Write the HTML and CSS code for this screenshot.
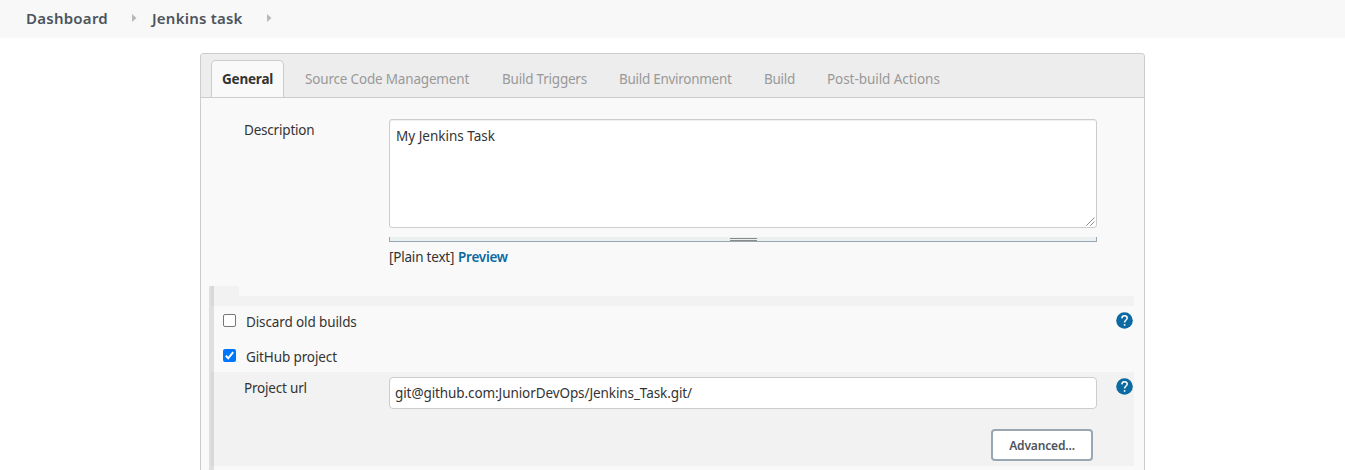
FILE: index.html
```html
<!DOCTYPE html>
<html lang="en">
<head>
<meta charset="utf-8">
<title>Jenkins task Config</title>
<link rel="stylesheet" href="styles.css">
</head>
<body>
<nav class="crumbs">
  <a class="crumb crumb-dashboard">Dashboard</a>
  <svg class="arrow" width="5" height="8" viewBox="0 0 5 8"><path d="M0 0L4.5 4L0 8Z" fill="#b8b8b8"/></svg>
  <a class="crumb crumb-task">Jenkins task</a>
  <svg class="arrow" width="5" height="8" viewBox="0 0 5 8"><path d="M0 0L4.5 4L0 8Z" fill="#b8b8b8"/></svg>
</nav>
<main class="panel">
  <div class="tabs">
    <div class="tab active">General</div>
    <div class="tab tab-scm">Source Code Management</div>
    <div class="tab tab-triggers">Build Triggers</div>
    <div class="tab tab-env">Build Environment</div>
    <div class="tab tab-build">Build</div>
    <div class="tab tab-post">Post-build Actions</div>
  </div>
  <section class="description">
    <label class="label label-description">Description</label>
    <div class="editor">
      <div class="textarea"><span>My Jenkins Task</span>
        <svg class="grip" width="9" height="9" viewBox="0 0 9 9"><path d="M0.5 8.5L8.5 0.5M4.5 8.5L8.5 4.5" stroke="#555" stroke-width="1" fill="none" stroke-dasharray="1.15 .26"/></svg>
      </div>
      <div class="handle"><i class="handle-lines"></i></div>
      <div class="hint"><span class="plain">[Plain text]</span><a class="preview">Preview</a></div>
    </div>
  </section>
  <section class="options">
    <div class="spacer-top"></div>
    <div class="spacer-bottom"></div>
    <div class="option">
      <span class="check"></span><span class="option-text text-discard">Discard old builds</span>
      <svg class="help" width="17" height="17" viewBox="0 0 17 17"><circle cx="8.5" cy="8.5" r="8.3" fill="#0b6aa2"/><path d="M5.8 6.4C5.9 4.6 7 3.7 8.5 3.7C10.1 3.7 11.2 4.7 11.2 6.1C11.2 8 8.6 8.2 8.6 10.6" fill="none" stroke="#fff" stroke-width="1.5"/><path d="M7.8 12.1h1.6v1.6H7.8z" fill="#fff"/></svg>
    </div>
    <div class="option option-github">
      <span class="check checked"><svg width="13" height="13" viewBox="0 0 13 13"><path d="M2.8 6.8L5.2 9.3L10.2 3.2" fill="none" stroke="#fff" stroke-width="2"/></svg></span><span class="option-text text-github">GitHub project</span>
    </div>
    <div class="project">
      <div class="project-row">
        <label class="label label-url">Project url</label>
        <div class="input"><span>git@github.com:JuniorDevOps/Jenkins_Task.git/</span></div>
        <svg class="help help-url" width="17" height="17" viewBox="0 0 17 17"><circle cx="8.5" cy="8.5" r="8.3" fill="#0b6aa2"/><path d="M5.8 6.4C5.9 4.6 7 3.7 8.5 3.7C10.1 3.7 11.2 4.7 11.2 6.1C11.2 8 8.6 8.2 8.6 10.6" fill="none" stroke="#fff" stroke-width="1.5"/><path d="M7.8 12.1h1.6v1.6H7.8z" fill="#fff"/></svg>
      </div>
      <button class="advanced">Advanced...</button>
    </div>
  </section>
</main>
</body>
</html>
```
FILE: styles.css
```css
* { box-sizing: border-box; }
body {
  margin: 0;
  background: #fff;
  color: #333;
  font: 13.5px/20px "Noto Sans", "Open Sans", sans-serif;
  white-space: nowrap;
}
.crumbs {
  display: flex;
  align-items: center;
  height: 38px;
  padding: 0 0 2px 26px;
  background: #f8f8f8;
  color: #4d545d;
  font-size: 15px;
  font-weight: 600;
}
.crumb-dashboard { width: 106px; letter-spacing: .25px; }
.crumb-task { width: 115px; margin-left: 15px; letter-spacing: .22px; }
.arrow { flex: none; }
.panel {
  width: 945px;
  height: 417px;
  margin: 15px 0 0 200px;
  border: 1px solid #ccc;
  border-bottom: 0;
  border-radius: 4px 4px 0 0;
  background: #f9f9f9;
}
.tabs {
  display: flex;
  height: 44px;
  padding: 6px 0 0 10px;
  border-bottom: 1px solid #ccc;
  border-radius: 3px 3px 0 0;
  background: #ededed;
  color: #999;
}
.tab { flex: none; padding-top: 9px; }
.active {
  width: 73px;
  height: 37px;
  padding: 8px 0 0 10px;
  border: 1px solid #ccc;
  border-bottom: 0;
  border-radius: 5px 5px 0 0;
  background: #f9f9f9;
  color: #333;
  font-weight: 700;
  letter-spacing: -.2px;
}
.tab-scm { width: 197px; margin-left: 21px; letter-spacing: -.18px; }
.tab-triggers { width: 117px; letter-spacing: -.22px; }
.tab-env { width: 145px; letter-spacing: -.28px; }
.tab-build { width: 63px; letter-spacing: -.3px; }
.tab-post { letter-spacing: -.06px; }
.description { display: flex; height: 188px; padding: 21px 0 0 43px; }
.label { flex: none; width: 145px; letter-spacing: -.2px; }
.label-description { padding-top: 1px; }
.editor { width: 708px; }
.textarea {
  position: relative;
  height: 109px;
  padding: 6px;
  border: 1px solid #ccc;
  border-radius: 3px;
  background: #fff;
  box-shadow: inset 0 1px 1px #0001;
}
.grip { position: absolute; right: 1px; bottom: 1px; }
.handle {
  display: flex;
  justify-content: center;
  height: 5px;
  margin-top: 9px;
  border: 1px solid #98a7b1;
  border-top: 0;
  background: #eaeff0;
}
.handle-lines { width: 27px; height: 3px; margin-top: 1px; border: solid #8a8c84; border-width: 1px 0; }
.hint { display: flex; margin-top: 5px; }
.plain { width: 69px; letter-spacing: -.2px; }
.preview { color: #0b6aa2; font-weight: 600; letter-spacing: -.25px; }
.options {
  height: 184px;
  margin-left: 8px;
  width: 925px;
  background: linear-gradient(90deg, #dfdfdf 5px, transparent 5px);
}
.spacer-top { width: 28px; height: 10px; margin-left: 2px; background: rgba(0, 0, 0, .027); }
.spacer-bottom { height: 10px; margin-left: 2px; background: rgba(0, 0, 0, .027); }
.option { display: flex; height: 35px; padding: 6px 0 0 14px; }
.option-github { height: 31px; }
.check { flex: none; width: 13px; height: 13px; margin-top: 2px; border: 1px solid #767676; border-radius: 2px; background: #fff; }
.checked { border: 0; background: #0075ff; }
.checked svg { display: block; }
.option-text { width: 870px; margin-left: 10px; letter-spacing: -.12px; }
.help { flex: none; display: block; }
.help-url { margin-top: 1px; }
.project { height: 94px; margin-left: 2px; padding: 5px 0 0 33px; background: rgba(0, 0, 0, .027); }
.project-row { display: flex; }
.label-url { padding-top: 1px; }
.input { width: 708px; height: 32px; margin-right: 19px; padding: 5px; border: 1px solid #ccc; border-radius: 4px; background: #fff; letter-spacing: -.09px; }
.advanced {
  display: block;
  width: 102px;
  height: 32px;
  margin: 20px 0 0 747px;
  padding: 1px 0 0;
  border: 2px solid #98a7b1;
  border-radius: 4px;
  background: #fff;
  color: #4d545d;
  font: 600 12px/20px "Noto Sans", sans-serif;
  letter-spacing: -.15px;
}
```
